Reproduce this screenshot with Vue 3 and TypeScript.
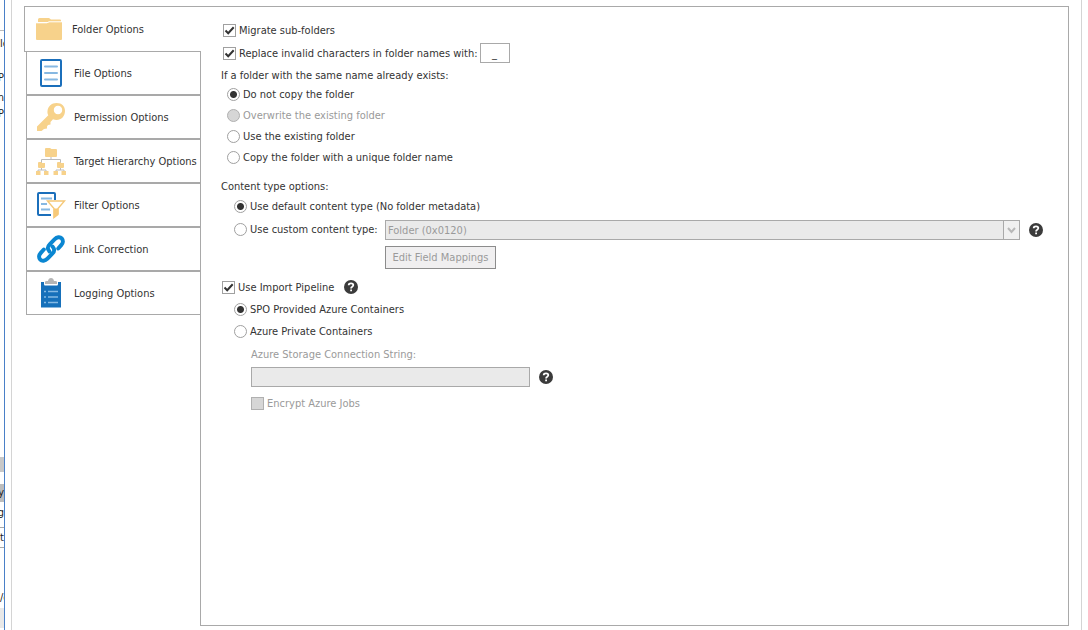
<script setup lang="ts">
import { ref } from 'vue'

interface Tab { id: string; label: string }

const tabs: Tab[] = [
  { id: 'folder', label: 'Folder Options' },
  { id: 'file', label: 'File Options' },
  { id: 'permission', label: 'Permission Options' },
  { id: 'hierarchy', label: 'Target Hierarchy Options' },
  { id: 'filter', label: 'Filter Options' },
  { id: 'link', label: 'Link Correction' },
  { id: 'logging', label: 'Logging Options' },
]
const active = ref('folder')

const existing = [
  { value: 'skip', label: 'Do not copy the folder', disabled: false },
  { value: 'overwrite', label: 'Overwrite the existing folder', disabled: true },
  { value: 'use', label: 'Use the existing folder', disabled: false },
  { value: 'unique', label: 'Copy the folder with a unique folder name', disabled: false },
]
const existingMode = ref('skip')
const migrateSub = ref(true)
const replaceInvalid = ref(true)
const replacement = ref('_')
const contentType = ref('default')
const usePipeline = ref(true)
const container = ref('spo')
const connection = ref('')
const encrypt = ref(false)
</script>

<template>
  <div class="window">
    <aside class="behind" aria-hidden="true">
      <span class="rule"></span>
      <span class="frag first">le</span>
      <span class="frag path">P</span>
      <span class="frag name">n</span>
      <span class="frag">P</span>
      <span class="scroll"></span>
      <span class="frag selected">y</span>
      <span class="frag item">g</span>
      <span class="frag boxed">ta</span>
      <span class="frag web">/e</span>
      <span class="footer"></span>
    </aside>

    <main class="pane">
      <div class="tabs" role="tablist" aria-orientation="vertical">
        <button
          v-for="tab in tabs"
          :key="tab.id"
          type="button"
          role="tab"
          class="tab"
          :class="{ active: active === tab.id }"
          :aria-selected="active === tab.id"
          @click="active = tab.id"
        >
          <svg class="icon" viewBox="0 0 30 30" aria-hidden="true">
            <g v-if="tab.id === 'folder'" fill="#f7d28b">
              <path d="M4 7V5.500Q4 4 5.500 4H15L17 5.500H26Q27 5.500 27 6.500V8H4Z" />
              <path d="M2 9H13L15 8H28V25Q28 26 27 26H3Q2 26 2 25Z" />
              <path d="M2 8.800H13L15 7.800H28" stroke="#fff" stroke-width="1" fill="none" />
            </g>
            <g v-else-if="tab.id === 'file'" fill="none">
              <rect x="5" y="2" width="20" height="26" rx="1" stroke="#1b6fbb" stroke-width="2" />
              <path d="M9 8.500H21M9 15H21M9 21.500H21" stroke="#86b8e2" stroke-width="2" stroke-linecap="round" />
            </g>
            <g v-else-if="tab.id === 'permission'">
              <path
                fill="#f7d28b"
                fill-rule="evenodd"
                d="M20.500 1C26 1 29 4.500 29 9C29 14 25.500 18 20.500 18C19.500 18 18 17.800 17 17.300L14.500 20V22.500L12 23L11 24.500V26.500L8 27L5.500 29H1V24.500L12.300 13.300C11.500 12 11.300 10.500 11.500 9C12 4.500 15.500 1 20.500 1ZM22 3.800C19.500 3.800 17.800 5.500 17.800 8C17.800 10.500 19.500 12.200 22 12.200C24.500 12.200 26.200 10.500 26.200 8C26.200 5.500 24.500 3.800 22 3.800Z"
              />
            </g>
            <g v-else-if="tab.id === 'hierarchy'">
              <path d="M15 11V13.500M5.500 17V13.500H24.500V17M5.500 21V24M24.500 21V24M2 25V24H10V25M20 25V24H28V25" fill="none" stroke="#bcbcbc" />
              <path
                fill="#f7d28b"
                d="M9 3Q9 2 10 2H14L15.500 3H20Q21 3 21 4V10Q21 11 20 11H10Q9 11 9 10ZM2 17Q2 16 3 16H5L6 17H9V21Q9 22 8 22H3Q2 22 2 21ZM21 17Q21 16 22 16H24L25 17H28V21Q28 22 27 22H22Q21 22 21 21ZM0 25H4.500V29H0ZM8 25H12.500V29H8ZM17.500 25H22V29H17.500ZM25.500 25H30V29H25.500Z"
              />
            </g>
            <g v-else-if="tab.id === 'filter'" fill="none">
              <path d="M15 25H3Q2 25 2 24V4Q2 3 3 3H18Q19 3 19 4V10" stroke="#1b6fbb" stroke-width="2" />
              <path d="M5 8.500H16M5 14H11M5 19.500H14" stroke="#86b8e2" stroke-width="2" />
              <path d="M11.500 11H28.500L22 18.500V24L18 27.500V18.500Z" fill="#fff" stroke="#f5c877" stroke-width="1.400" />
              <path d="M17.500 18.500H22.500V25L17.500 28.500Z" fill="#f7c978" />
            </g>
            <g v-else-if="tab.id === 'link'" fill="none" stroke="#0a86d1" stroke-width="4" stroke-linecap="round">
              <path d="M13.500 17.500C11 14.500 11.300 12.700 13.700 10.300L18.500 5.300C21 2.800 24 2.500 25.700 4.300C27.500 6.200 27.200 9 25.200 11.200L22.200 14.500" />
              <path d="M16.500 12.500C19 15.500 18.700 17.300 16.300 19.700L11.500 24.700C9 27.200 6 27.500 4.300 25.700C2.500 23.800 2.800 21 4.800 18.800L7.800 15.500" />
            </g>
            <g v-else>
              <path d="M5 4H25V29.500H5Z" fill="#1670ba" />
              <path d="M8 3H22V6Q22 7.500 21 7.500H9Q8 7.500 8 6Z" fill="#fff" />
              <path d="M9 6V4Q9 3 10.500 3H12Q12.500 0 15 0Q17.500 0 18 3H19.500Q21 3 21 4V6Z" fill="#b5b5b5" />
              <path d="M8 13.500H10M12 13.500H22M8 19H10M12 19H22M8 24.500H10M12 24.500H22" stroke="#84b9e4" stroke-width="1.500" />
            </g>
          </svg>
          <span>{{ tab.label }}</span>
        </button>
      </div>

      <section class="panel" role="tabpanel">
        <div class="row sub">
          <label class="choice"><input v-model="migrateSub" type="checkbox" />Migrate sub-folders</label>
        </div>
        <div class="row replace">
          <label class="choice"><input v-model="replaceInvalid" type="checkbox" />Replace invalid characters in folder names with:</label>
          <input v-model="replacement" class="field char" type="text" aria-label="Replacement character" />
        </div>

        <fieldset class="group existing">
          <legend>If a folder with the same name already exists:</legend>
          <label v-for="o in existing" :key="o.value" class="choice" :class="{ off: o.disabled }">
            <input v-model="existingMode" type="radio" name="existing" :value="o.value" :disabled="o.disabled" />{{ o.label }}
          </label>
        </fieldset>

        <fieldset class="group types">
          <legend>Content type options:</legend>
          <label class="choice"><input v-model="contentType" type="radio" name="ctype" value="default" />Use default content type (No folder metadata)</label>
          <div class="custom">
            <label class="choice"><input v-model="contentType" type="radio" name="ctype" value="custom" />Use custom content type:</label>
            <div class="combo">
              <select aria-label="Custom content type" disabled>
                <option>Folder (0x0120)</option>
              </select>
              <span class="arrow">
                <svg viewBox="0 0 9 7" width="9" height="7" aria-hidden="true"><path d="M1 1L4.500 5L8 1" fill="none" stroke="#b8b8b8" stroke-width="2" /></svg>
              </span>
            </div>
            <button type="button" class="help" aria-label="Content type help">
              <svg viewBox="0 0 14 14" aria-hidden="true"><circle cx="7" cy="7" r="7" fill="#3b3b3b" /><path d="M4.700 5.300Q4.700 3.300 7 3.300Q9.300 3.300 9.300 5.100Q9.300 6.100 8.200 6.800Q7.100 7.400 7.100 8.500M7.100 9.600V11.300" fill="none" stroke="#fff" stroke-width="1.800" /></svg>
            </button>
            <button type="button" class="mappings" disabled>Edit Field Mappings</button>
          </div>
        </fieldset>

        <div class="row pipeline">
          <label class="choice"><input v-model="usePipeline" type="checkbox" />Use Import Pipeline</label>
          <button type="button" class="help" aria-label="Import pipeline help">
            <svg viewBox="0 0 14 14" aria-hidden="true"><circle cx="7" cy="7" r="7" fill="#3b3b3b" /><path d="M4.700 5.300Q4.700 3.300 7 3.300Q9.300 3.300 9.300 5.100Q9.300 6.100 8.200 6.800Q7.100 7.400 7.100 8.500M7.100 9.600V11.300" fill="none" stroke="#fff" stroke-width="1.800" /></svg>
          </button>
        </div>
        <div class="azure">
          <label class="choice"><input v-model="container" type="radio" name="container" value="spo" />SPO Provided Azure Containers</label>
          <label class="choice"><input v-model="container" type="radio" name="container" value="private" />Azure Private Containers</label>
          <div class="private">
            <label class="caption off" for="connection">Azure Storage Connection String:</label>
            <div class="connection">
              <input id="connection" v-model="connection" class="field" type="text" disabled />
              <button type="button" class="help" aria-label="Connection string help">
                <svg viewBox="0 0 14 14" aria-hidden="true"><circle cx="7" cy="7" r="7" fill="#3b3b3b" /><path d="M4.700 5.300Q4.700 3.300 7 3.300Q9.300 3.300 9.300 5.100Q9.300 6.100 8.200 6.800Q7.100 7.400 7.100 8.500M7.100 9.600V11.300" fill="none" stroke="#fff" stroke-width="1.800" /></svg>
              </button>
            </div>
            <label class="choice off"><input v-model="encrypt" type="checkbox" disabled />Encrypt Azure Jobs</label>
          </div>
        </div>
      </section>
    </main>
  </div>
</template>

<style>
body { background: #fff; }
</style>

<style scoped>
.window, .window * { box-sizing: border-box; }
.window {
  display: flex;
  min-height: 100vh;
  padding-right: 6px;
  font: 11px/17px "DejaVu Sans Condensed", "Noto Sans", sans-serif;
  color: #333;
}
button, input, select { font: inherit; color: inherit; margin: 0; padding: 0; }

.behind {
  display: flex;
  flex-direction: column;
  flex: none;
  width: 5px;
  margin-right: 6px;
  overflow: hidden;
  border-right: 1px solid #4a80c8;
  color: #222;
}
.behind > * { flex: none; }
.frag { display: flex; justify-content: flex-end; height: 16px; white-space: nowrap; }
.rule { margin-top: 30px; height: 1px; background: #bbb; }
.first { margin-top: 4px; justify-content: flex-start; }
.path { margin-top: 18px; }
.name { margin-top: 4px; }
.scroll { margin-top: 336px; height: 15px; background: #c8c8c8; }
.selected { margin-top: 12px; height: 18px; background: #bdbdbd; }
.item { margin-top: 2px; }
.boxed { margin-top: 7px; height: 21px; padding-top: 1px; border: solid #aaa; border-width: 1px 0; justify-content: flex-start; }
.web { margin-top: 41px; justify-content: flex-start; }
.footer { margin-top: 3px; height: 20px; background: #e8e8e8; }

.pane {
  display: flex;
  flex: 1;
  padding: 6px 12px 4px;
  border: solid #d4d4d4;
  border-width: 0 1px;
}
.tabs {
  display: flex;
  flex-direction: column;
  align-items: flex-end;
  flex: none;
  width: 177px;
  margin-right: -1px;
}
.tab {
  display: flex;
  align-items: center;
  gap: 8px;
  width: 175px;
  height: 44px;
  padding-left: 9px;
  border: 1px solid #a9a9a9;
  background: #fff;
  white-space: nowrap;
}
.tab.active {
  position: relative;
  width: 177px;
  height: 46px;
  margin-bottom: -1px;
  border-right: 0;
}
.icon { flex: none; width: 30px; height: 30px; }

.panel {
  flex: 1;
  min-width: 0;
  padding: 12px 25px 12px 20px;
  border: 1px solid #a9a9a9;
}
.row { display: flex; align-items: center; height: 22px; padding-left: 2px; }
.sub { height: 23px; }
.replace { gap: 2px; }
.choice { display: flex; align-items: center; gap: 3px; height: 22px; white-space: nowrap; }
.off { color: #9a9a9a; }

input[type="checkbox"], input[type="radio"] {
  appearance: none;
  flex: none;
  width: 13px;
  height: 13px;
  border: 1px solid #a0a0a0;
  background: #fff center / 11px 11px no-repeat;
}
input[type="checkbox"]:checked {
  background-image: url("data:image/svg+xml,%3Csvg xmlns='http://www.w3.org/2000/svg' viewBox='0 0 11 11'%3E%3Cpath d='M1.500 5.500L4.200 8.200L9.700 2.200' fill='none' stroke='%23333' stroke-width='2'/%3E%3C/svg%3E");
}
input[type="radio"] { border-radius: 50%; }
input[type="radio"]:checked { background-image: radial-gradient(circle, #333 3px, transparent 4px); }
input[type="checkbox"]:disabled, input[type="radio"]:disabled { background-color: #d6d6d6; border-color: #b0b0b0; }

.field { height: 20px; border: 1px solid #a9a9a9; background: #fff; }
.field:disabled { background: #eaeaea; }
.char { width: 30px; text-align: center; }

.group { min-width: 0; margin: 0; padding: 0 0 0 6px; border: 0; }
.group legend { height: 18px; padding: 0; margin-left: -6px; line-height: 20px; }
.group .choice { height: 21px; }
.existing { margin-top: 2px; }
.types { margin-top: 8px; padding-left: 13px; }
.types legend { height: 19px; line-height: 22px; margin-left: -13px; }
.types .choice { height: 23px; }
.custom {
  display: grid;
  grid-template-columns: 151px 1fr 23px;
  grid-template-rows: 24px 23px;
  align-items: center;
  row-gap: 4px;
}
.custom .choice { align-self: start; }
.custom .help { margin-left: 9px; }
.combo { position: relative; height: 20px; }
.combo select {
  appearance: none;
  display: block;
  width: 100%;
  height: 20px;
  padding: 0 20px 0 2px;
  border: 1px solid #a9a9a9;
  border-radius: 0;
  background: #eaeaea;
  color: #9a9a9a;
  opacity: 1;
}
.arrow {
  position: absolute;
  top: 1px;
  right: 1px;
  bottom: 1px;
  display: flex;
  align-items: center;
  justify-content: center;
  width: 16px;
  border-left: 1px solid #a9a9a9;
  background: #f0f0f0;
  pointer-events: none;
}
.mappings {
  grid-column: 2;
  justify-self: start;
  width: 111px;
  height: 23px;
  border: 1px solid #8c8c8c;
  background: #f0eff0;
  color: #9a9a9a;
}
.help { display: block; flex: none; width: 14px; height: 14px; border: 0; background: none; }
.help svg { display: block; width: 14px; height: 14px; }

.pipeline { margin-top: 7px; gap: 10px; padding-left: 1px; }
.azure { padding-left: 13px; }
.private { padding-left: 17px; }
.caption { display: block; height: 25px; line-height: 26px; }
.connection { display: flex; align-items: center; gap: 9px; margin-bottom: 5px; }
.connection .field { width: 279px; }
</style>
